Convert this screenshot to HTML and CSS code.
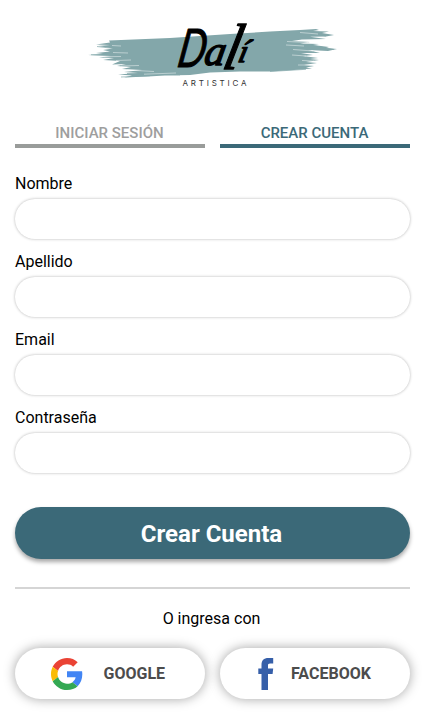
FILE: index.html
```html
<!DOCTYPE html>
<html lang="es">
<head>
<meta charset="utf-8">
<meta name="viewport" content="width=device-width, initial-scale=1">
<title>Crear cuenta</title>
<link rel="stylesheet" href="styles.css">
</head>
<body>
<main class="page">
  <svg class="logo" viewBox="85 15 255 75" role="img" aria-label="Dalí Artistica">
    <g class="brush">
      <path d="M109 40.5 L170 38 L230 34 L270 31.5 L300 30 L316 29 L319 30 L313 31 L329 31.5 L322 33 L334 35 L326 36.5 L310 36.8 L326 39 L302 39.5 L292 41 L310 42 L300 43.5 L319 44 L313 45 L329 47 L326 48 L337 49 L328 51 L308 50 L320 53 L301 53 L313 55 L303 56 L318 58 L310 59 L319 60 L306 62 L317 63 L304 65 L314 66 L306 67.5 L312 68.5 L294 70 L270 71.5 L240 71.5 L210 72.5 L190 75 L165 75.5 L148 76.5 L124 77.5 L132 75.5 L118 74.5 L138 73 L124 72 L142 70 L122 69 L131 67 L117 66 L126 64 L112 64.5 L120 61 L103 60 L114 58 L99 57.5 L111 56 L98 55.5 L88 55 L103 54 L96 53 L110 51.5 L103 50 L113 48.5 L98 46 L110 45 L96 44.5 L110 42.5Z"/>
      <path class="bristle" d="M91 54.7H110M97 46.5L118 49M121 77L150 75.7M127 73.5L180 75M311 45.2L334 49.5M304 33L326 36M270 71.5L306 69.3"/>
    </g>
    <path class="gap" d="M112 45.5L121 46M113 52.5L128 53M104 56.7L121 56.5M116 60.5L131 60M121 66L139 65.5M127 70L154 71.5M144 74.2L176 73M287 41.5L308 42.5M286 45L304 46M293 49.5L313 51M292 55L306 56M302 60.5L314 61M298 65L311 65M300 32.5L318 34"/>
    <g class="logo-name">
      <text class="initial" transform="translate(176 67) skewX(-10) scale(.74 1)">D</text>
      <text class="small" transform="translate(203 64.5) skewX(-10)">a</text>
      <text class="tall" transform="translate(221 69) skewX(-13) scale(.9 1)">l</text>
      <text class="accent" transform="translate(237 61.5) skewX(-13)">í</text>
    </g>
    <text class="logo-sub" x="182.5" y="85.7" textLength="64">ARTISTICA</text>
  </svg>

  <nav class="tabs">
    <a class="tab">INICIAR SESIÓN</a>
    <a class="tab tab-active">CREAR CUENTA</a>
  </nav>

  <form class="form">
    <label class="field">Nombre<input type="text"></label>
    <label class="field">Apellido<input type="text"></label>
    <label class="field">Email<input type="email"></label>
    <label class="field">Contraseña<input type="password"></label>
    <button class="submit" type="button">Crear Cuenta</button>
  </form>

  <p class="alternative">O ingresa con</p>

  <div class="social">
    <button class="social-button google" type="button">
      <svg width="32" height="32" viewBox="0 0 48 48" aria-hidden="true">
        <path fill="#EA4335" d="M24 9.5c3.54 0 6.71 1.22 9.21 3.6l6.85-6.85C35.9 2.38 30.47 0 24 0 14.62 0 6.51 5.38 2.56 13.22l7.98 6.19C12.43 13.72 17.74 9.5 24 9.5z"/>
        <path fill="#4285F4" d="M46.98 24.55c0-1.57-.15-3.09-.38-4.55H24v9.02h12.94c-.58 2.96-2.26 5.48-4.78 7.18l7.73 6c4.51-4.18 7.09-10.36 7.09-17.65z"/>
        <path fill="#FBBC05" d="M10.53 28.59c-.48-1.45-.76-2.99-.76-4.59s.27-3.14.76-4.59l-7.98-6.19C.92 16.46 0 20.12 0 24s.92 7.54 2.56 10.78l7.97-6.19z"/>
        <path fill="#34A853" d="M24 48c6.48 0 11.93-2.13 15.89-5.81l-7.73-6c-2.15 1.45-4.92 2.3-8.16 2.3-6.26 0-11.57-4.22-13.47-9.91l-7.98 6.19C6.51 42.62 14.62 48 24 48z"/>
      </svg>
      <span>GOOGLE</span>
    </button>
    <button class="social-button facebook" type="button">
      <svg width="16" height="32" viewBox="0 0 16 32" aria-hidden="true">
        <path fill="#365fa9" d="M3.5 32V16H.3V10.6h3.2V7.2C3.5 2.2 5.7 0 10.5 0h4.7v5.4h-3.1c-1.8 0-2.1.8-2.1 2.2v3h5.2L14.6 16H10v16z"/>
      </svg>
      <span>FACEBOOK</span>
    </button>
  </div>
</main>
</body>
</html>
```
FILE: styles.css
```css
* {
  box-sizing: border-box;
}

body {
  margin: 0;
  background: #fff;
  color: #000;
  font: 16px/20px Roboto, sans-serif;
}

.page {
  display: flex;
  flex-direction: column;
  min-height: 728px;
  padding: 15px 15px 0;
}

.logo {
  width: 255px;
  height: 75px;
  align-self: center;
  overflow: visible;
}

.brush {
  fill: #83a7aa;
}

.bristle {
  stroke: #83a7aa;
  stroke-width: .7;
}

.gap {
  fill: none;
  stroke: #fff;
  stroke-width: .6;
  opacity: .75;
}

.logo-name {
  font: italic 400 40px "Liberation Serif", serif;
  stroke: #000;
  stroke-width: 1.3;
  stroke-linejoin: round;
}

.initial {
  font: italic 400 53px Lato, sans-serif;
  stroke-width: 1;
}

.small {
  font-size: 42px;
}

.tall {
  font-size: 65px;
}

.accent {
  font-size: 32px;
}

.logo-sub {
  font: 400 8px Inter, sans-serif;
  fill: #333;
}

.tabs {
  display: grid;
  grid-template-columns: 1fr 1fr;
  gap: 15px;
  margin-top: 33px;
}

.tab {
  height: 25px;
  padding-right: 1px;
  border-bottom: 4px solid #999c9a;
  color: #9e9e9e;
  font-size: 15px;
  font-weight: 500;
  line-height: 20px;
  text-align: center;
}

.tab-active {
  border-color: #3b6978;
  color: #3b6978;
}

.form {
  display: flex;
  flex-direction: column;
  gap: 13px;
  padding: 26px 0 28px;
  border-bottom: 2px solid #d5d5d5;
}

.field {
  display: flex;
  flex-direction: column;
  gap: 5px;
}

.field input {
  width: 100%;
  height: 40px;
  padding: 0 20px;
  border: 0;
  border-radius: 20px;
  background: #fff;
  box-shadow: 0 0 3px rgba(0, 0, 0, .3);
  font: inherit;
  outline: 0;
}

.submit {
  height: 52px;
  margin-top: 21px;
  padding: 2px 2px 0 0;
  border: 0;
  border-radius: 26px;
  background: #3b6978;
  box-shadow: 0 3px 4px rgba(0, 0, 0, .35);
  color: #fff;
  font: 700 24px Roboto, sans-serif;
}

.alternative {
  margin: 20px 0 19px;
  padding-right: 2px;
  text-align: center;
}

.social {
  display: grid;
  grid-template-columns: 1fr 1fr;
  gap: 15px;
}

.social-button {
  display: flex;
  align-items: center;
  height: 51px;
  padding: 0 0 0 36px;
  border: 0;
  border-radius: 26px;
  background: #fff;
  box-shadow: 0 0 12px rgba(0, 0, 0, .36);
  color: #4c4c4c;
  font: 700 16px Roboto, sans-serif;
}

.google {
  gap: 20.5px;
}

.facebook {
  gap: 17px;
  padding-left: 38px;
}
```
